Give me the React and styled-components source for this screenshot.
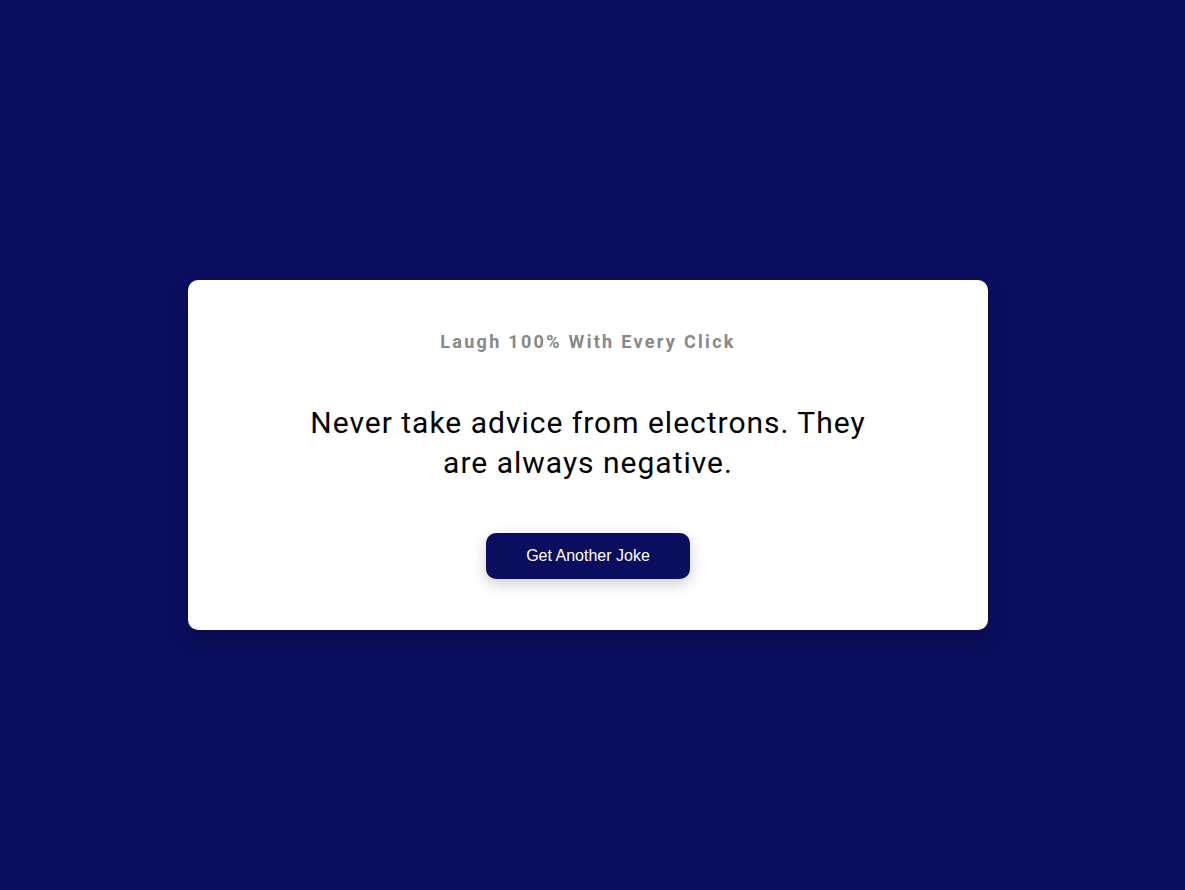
import React from 'react'
import styled, { createGlobalStyle } from 'styled-components'

const GlobalStyle = createGlobalStyle`
  * {
    box-sizing: border-box;
  }

  body {
    margin: 0;
    background-color: #0b0e5e;
    font-family: Roboto, "Noto Sans", sans-serif;
  }
`

const App = () => {
  return (
    <>
      <GlobalStyle />
      <Page>
        <Card>
          <Heading>Laugh 100% With Every Click</Heading>
          <Joke>Never take advice from electrons. They are always negative.</Joke>
          <JokeButton>Get Another Joke</JokeButton>
        </Card>
      </Page>
    </>
  )
}

export default App

// Styled Components
const Page = styled.div`
  min-height: 100vh;
  padding: 19px 9px 0 0;
  display: flex;
  justify-content: center;
  align-items: center;
`

const Card = styled.div`
  width: 800px;
  background-color: #fff;
  border-radius: 10px;
  padding: 51px 20px 51px;
  box-shadow: 0 10px 20px rgba(0, 0, 0, 0.2);

  display: flex;
  flex-direction: column;
  align-items: center;
  text-align: center;
`

const Heading = styled.h3`
  margin: 0;
  font-size: 18px;
  font-weight: 700;
  line-height: 21px;
  letter-spacing: 2.3px;
  color: #888;
`

const Joke = styled.div`
  max-width: 600px;
  margin: 51px 0 50px;
  font-size: 30px;
  line-height: 40px;
  letter-spacing: 1px;
  color: #000;
`

const JokeButton = styled.button`
  background-color: #0b0e5e;
  color: #fff;
  border: none;
  border-radius: 10px;
  padding: 14px 40px;
  font-family: "Liberation Sans", Arial, sans-serif;
  font-size: 16px;
  box-shadow: 0 5px 15px rgba(0, 0, 0, 0.2);
  cursor: pointer;
`
